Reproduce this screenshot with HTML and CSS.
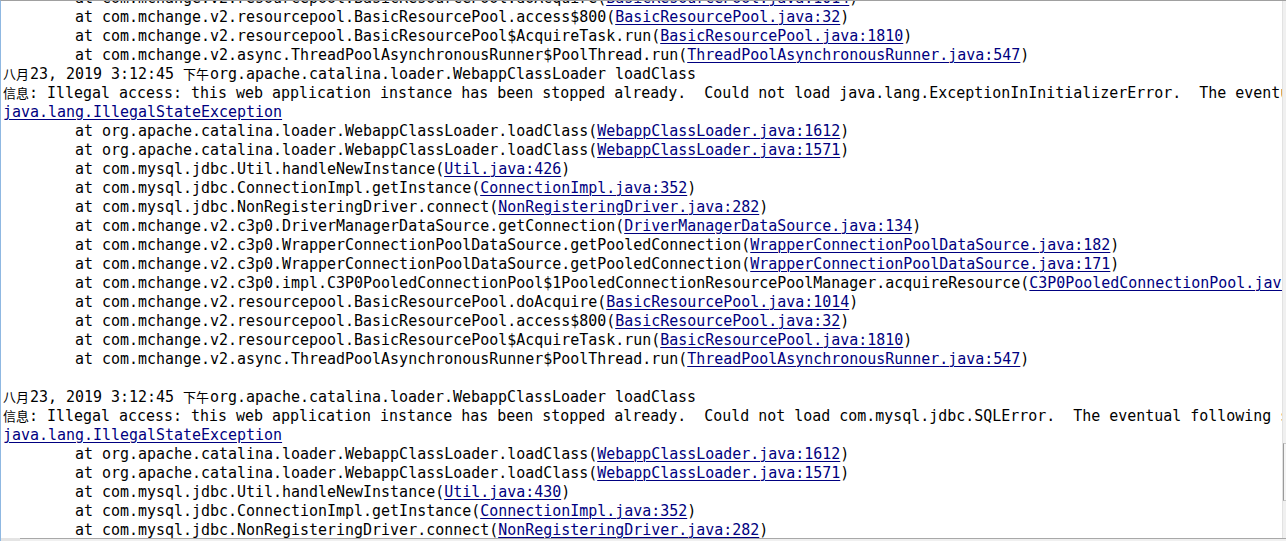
FILE: index.html
```html
<!DOCTYPE html>
<html>
<head>
  <meta charset="UTF-8">
  <title>Console</title>
  <link rel="stylesheet" href="styles.css">
</head>
<body>
  <div class="console">
<pre class="output">	at com.mchange.v2.resourcepool.BasicResourcePool.doAcquire(<a class="src">BasicResourcePool.java:1014</a>)
	at com.mchange.v2.resourcepool.BasicResourcePool.access$800(<a class="src">BasicResourcePool.java:32</a>)
	at com.mchange.v2.resourcepool.BasicResourcePool$AcquireTask.run(<a class="src">BasicResourcePool.java:1810</a>)
	at com.mchange.v2.async.ThreadPoolAsynchronousRunner$PoolThread.run(<a class="src">ThreadPoolAsynchronousRunner.java:547</a>)
<span class="cjk">八月 </span>23, 2019 3:12:45 <span class="cjk">下午 </span>org.apache.catalina.loader.WebappClassLoader loadClass
<span class="cjk">信息</span>: Illegal access: this web application instance has been stopped already.  Could not load java.lang.ExceptionInInitializerError.  The eventual following stack trace is caused by an error thrown for debugging purposes as well as to attempt to terminate the thread which caused the illegal access, and has no functional impact.
<a class="src">java.lang.IllegalStateException</a>
	at org.apache.catalina.loader.WebappClassLoader.loadClass(<a class="src">WebappClassLoader.java:1612</a>)
	at org.apache.catalina.loader.WebappClassLoader.loadClass(<a class="src">WebappClassLoader.java:1571</a>)
	at com.mysql.jdbc.Util.handleNewInstance(<a class="src">Util.java:426</a>)
	at com.mysql.jdbc.ConnectionImpl.getInstance(<a class="src">ConnectionImpl.java:352</a>)
	at com.mysql.jdbc.NonRegisteringDriver.connect(<a class="src">NonRegisteringDriver.java:282</a>)
	at com.mchange.v2.c3p0.DriverManagerDataSource.getConnection(<a class="src">DriverManagerDataSource.java:134</a>)
	at com.mchange.v2.c3p0.WrapperConnectionPoolDataSource.getPooledConnection(<a class="src">WrapperConnectionPoolDataSource.java:182</a>)
	at com.mchange.v2.c3p0.WrapperConnectionPoolDataSource.getPooledConnection(<a class="src">WrapperConnectionPoolDataSource.java:171</a>)
	at com.mchange.v2.c3p0.impl.C3P0PooledConnectionPool$1PooledConnectionResourcePoolManager.acquireResource(<a class="src">C3P0PooledConnectionPool.java:137</a>)
	at com.mchange.v2.resourcepool.BasicResourcePool.doAcquire(<a class="src">BasicResourcePool.java:1014</a>)
	at com.mchange.v2.resourcepool.BasicResourcePool.access$800(<a class="src">BasicResourcePool.java:32</a>)
	at com.mchange.v2.resourcepool.BasicResourcePool$AcquireTask.run(<a class="src">BasicResourcePool.java:1810</a>)
	at com.mchange.v2.async.ThreadPoolAsynchronousRunner$PoolThread.run(<a class="src">ThreadPoolAsynchronousRunner.java:547</a>)

<span class="cjk">八月 </span>23, 2019 3:12:45 <span class="cjk">下午 </span>org.apache.catalina.loader.WebappClassLoader loadClass
<span class="cjk">信息</span>: Illegal access: this web application instance has been stopped already.  Could not load com.mysql.jdbc.SQLError.  The eventual following stack trace is caused by an error thrown for debugging purposes as well as to attempt to terminate the thread which caused the illegal access, and has no functional impact.
<a class="src">java.lang.IllegalStateException</a>
	at org.apache.catalina.loader.WebappClassLoader.loadClass(<a class="src">WebappClassLoader.java:1612</a>)
	at org.apache.catalina.loader.WebappClassLoader.loadClass(<a class="src">WebappClassLoader.java:1571</a>)
	at com.mysql.jdbc.Util.handleNewInstance(<a class="src">Util.java:430</a>)
	at com.mysql.jdbc.ConnectionImpl.getInstance(<a class="src">ConnectionImpl.java:352</a>)
	at com.mysql.jdbc.NonRegisteringDriver.connect(<a class="src">NonRegisteringDriver.java:282</a>)
	at com.mchange.v2.c3p0.DriverManagerDataSource.getConnection(<a class="src">DriverManagerDataSource.java:134</a>)</pre>
    <div class="vscroll"><div class="vthumb"></div></div>
    <div class="hscroll"><div class="hthumb"></div></div>
  </div>
</body>
</html>
```

FILE: styles.css
```css
* {
  margin: 0;
  padding: 0;
  box-sizing: border-box;
}

html, body {
  width: 1286px;
  height: 541px;
  overflow: hidden;
  background: #fff;
}

.console {
  position: relative;
  width: 1286px;
  height: 541px;
  overflow: hidden;
  border-top: 1px solid #a0a0a0;
  border-left: 1px solid #8fb8e2;
  background: #fff;
}

.output {
  margin-top: -12px;
  padding-left: 2px;
  font-family: "DejaVu Sans Mono", "Liberation Mono", monospace;
  font-size: 14.96px;
  line-height: 19px;
  color: #000;
  tab-size: 8;
  -moz-tab-size: 8;
  white-space: pre;
}

.src {
  color: #000080;
  text-decoration: underline;
  text-decoration-thickness: 1px;
  text-underline-offset: 2px;
}

.cjk {
  font-family: "Noto Sans CJK SC", sans-serif;
  font-size: 13px;
  line-height: 13px;
  word-spacing: -2px;
}

/* scrollbars at the edges of the view */
.vscroll {
  position: absolute;
  top: 0;
  right: 0;
  width: 4px;
  height: 540px;
  background: #f0f0f0;
  border-left: 1px solid #e2e2e2;
}

.vthumb {
  margin-top: 442px;
  height: 58px;
  border-left: 1px solid #9a9a9a;
  border-top: 1px solid #c8c8c8;
  border-bottom: 1px solid #c8c8c8;
  background: #f4f4f4;
}

.hscroll {
  position: absolute;
  left: -1px;
  bottom: 0;
  width: 1287px;
  height: 3px;
  background: #f0f0f0;
  border-top: 1px solid #a8a8a8;
}

.hthumb {
  width: 20px;
  height: 3px;
  margin-top: -1px;
  background: #e4e4e4;
}
```
